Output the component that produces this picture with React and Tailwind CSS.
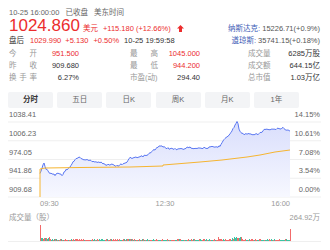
import React from "react";

const FONT = "font-['Liberation_Sans','Noto_Sans_CJK_SC',sans-serif]";

// pseudo random so the chart looks the same every run
const rnd = (i) => {
  const x = Math.sin(i * 12.9898 + 78.233) * 43758.5453;
  return x - Math.floor(x);
};

const priceKeys = [
  [40, 173], [42, 168], [44, 163], [46, 169], [49, 172], [52, 174], [55, 175], [58, 173],
  [62, 175], [66, 170], [70, 167], [74, 161], [78, 157], [82, 159], [87, 160], [92, 161],
  [97, 162], [102, 163], [107, 165], [112, 164], [117, 166], [122, 164], [127, 162], [130, 158],
  [135, 158], [140, 157], [144, 156], [148, 155], [151, 152], [154, 150], [157, 148], [160, 146],
  [164, 147], [167, 148], [172, 149], [180, 149], [185, 149], [187, 147], [192, 148], [200, 148],
  [207, 148], [213, 147], [217, 147], [220, 146], [222, 142], [224, 139], [227, 137], [230, 134],
  [232, 131], [234, 127], [236, 123], [237, 121.5], [238, 124], [239, 129], [241, 132], [243, 134],
  [248, 134], [253, 135], [258, 134], [262, 132], [265, 129], [270, 130], [277, 129], [283, 128],
  [287, 130], [290, 131],
];

const interp = (keys, x) => {
  for (let i = 0; i < keys.length - 1; i++) {
    const [x0, y0] = keys[i];
    const [x1, y1] = keys[i + 1];
    if (x >= x0 && x <= x1) return y0 + ((y1 - y0) * (x - x0)) / (x1 - x0 || 1);
  }
  return keys[keys.length - 1][1];
};

const pricePts = [];
for (let x = 40; x <= 290; x += 1) {
  const j = x === 237 || x === 44 ? 0 : (rnd(x) - 0.5) * 1.6;
  pricePts.push([x, interp(priceKeys, x) + j]);
}
const priceLine = pricePts.map((p, i) => `${i ? "L" : "M"}${p[0]},${p[1].toFixed(2)}`).join(" ");
const priceArea = `M40,197 ${pricePts.map((p) => `L${p[0]},${p[1].toFixed(2)}`).join(" ")} L290,197 Z`;

const avgLine =
  "M40,197 L40,169 L45,168 L80,167.5 L130,167 L163,166 L163,165 L200,162 L222,160 L247,157 L260,155 L275,152 L290,150";

const volBars = [];
for (let x = 40; x <= 290; x++) {
  let h = 0.6 + rnd(x * 3.1) * 1.4;
  if (x === 40) h = 16;
  else if (x < 50) h = 2 + rnd(x) * 1.6;
  else if (x === 218) h = 4;
  else if (x >= 232 && x <= 241) h = 2 + rnd(x) * 2;
  else if (x === 290) h = 12;
  else if (rnd(x * 7.7) > 0.96) h = 2.5;
  const red = x === 40 || x === 290 || x === 218 || rnd(x * 5.3) > 0.5;
  volBars.push({ x, h, color: red ? "#f26b6b" : "#3cc4a2" });
}

const stats = [
  [["今", "开"], "951.500", true, ["最", "高"], "1045.000", true, "成交量", "6285万股"],
  [["昨", "收"], "909.680", false, ["最", "低"], "944.200", true, "成交额", "644.15亿"],
  [["换", "手", "率"], "6.27%", false, ["市盈(动)"], "294.40", false, "总市值", "1.03万亿"],
];

const tabs = ["分时", "五日", "日K", "周K", "月K", "1年"];

const leftAxis = ["1038.41", "1006.23", "974.05", "941.86", "909.68"];
const rightAxis = ["14.15%", "10.61%", "7.08%", "3.54%", "0.00%"];
const gridY = [122, 140.75, 159.5, 178.25, 197];

function Label({ parts }) {
  return (
    <span className="flex w-[28px] justify-between text-[#999]">
      {parts.map((p) => (
        <span key={p}>{p}</span>
      ))}
    </span>
  );
}

export default function App() {
  return (
    <div className={`w-[330px] h-[250px] overflow-hidden bg-white ${FONT} text-[7.5px]`}>
      {/* header */}
      <div className="flex justify-between pl-[9px] pr-[10px] pt-[8px]">
        <div className="flex flex-col">
          <div className="flex h-[9px] items-center gap-[6px] leading-[9px] text-[#666]">
            <span>10-25 16:00:00</span>
            <span>已收盘</span>
            <span>美东时间</span>
          </div>
          <div className="flex h-[17px] items-baseline leading-[17px] text-[#ec2d2d]">
            <span className="text-[17px]">1024.860</span>
            <span className="ml-[3px]">美元</span>
            <span className="ml-[5px]">+115.180 (+12.66%)</span>
            <svg width="7" height="7" viewBox="0 0 7 7" className="ml-[6px] self-center mt-[5px]">
              <polygon points="3.5,0 7,3.6 5,3.6 5,7 2,7 2,3.6 0,3.6" fill="#ec2d2d" />
            </svg>
          </div>
          <div className="mt-[1px] flex h-[12px] items-center leading-[12px]">
            <span className="text-[#333]">盘后</span>
            <span className="ml-[6px] text-[#ec2d2d]">1029.990</span>
            <span className="ml-[4px] text-[#ec2d2d]">+5.130</span>
            <span className="ml-[5px] text-[#ec2d2d]">+0.50%</span>
            <span className="ml-[5px] text-[#333]">10-25 19:59:58</span>
          </div>
        </div>
        <div className="flex flex-col items-end justify-end">
          <div className="h-[12px] leading-[12px]">
            <span className="text-[#3c5bb6]">纳斯达克: </span>
            <span className="text-[#555]">15226.71(+0.9%)</span>
          </div>
          <div className="h-[12px] leading-[12px]">
            <span className="text-[#3c5bb6]">道琼斯: </span>
            <span className="text-[#555]">35741.15(+0.18%)</span>
          </div>
        </div>
      </div>

      {/* stats */}
      <div className="mt-[1px] flex flex-col pl-[9px] pr-[10px]">
        {stats.map((r, i) => (
          <div key={i} className="flex h-[12px] items-center leading-[12px]">
            <div className="flex w-[70px] justify-between">
              <Label parts={r[0]} />
              <span className={r[2] ? "text-[#ec2d2d]" : "text-[#333]"}>{r[1]}</span>
            </div>
            <div className="ml-[51px] flex w-[70px] justify-between">
              {r[3].length === 1 ? <span className="text-[#999]">{r[3][0]}</span> : <Label parts={r[3]} />}
              <span className={r[5] ? "text-[#ec2d2d]" : "text-[#333]"}>{r[4]}</span>
            </div>
            <div className="ml-[48px] flex flex-1 justify-between">
              <span className="text-[#999]">{r[6]}</span>
              <span className="text-[#333]">{r[7]}</span>
            </div>
          </div>
        ))}
      </div>

      {/* tabs */}
      <div className="mt-[8px] flex gap-[4.2px] pl-[8px]">
        {tabs.map((t, i) => (
          <div
            key={t}
            className={`flex h-[15.5px] w-[45px] items-center justify-center rounded-[2px] bg-[#f3f4f6] text-[7.5px] ${
              i === 0 ? "font-bold text-[#333]" : "text-[#666]"
            }`}
          >
            {t}
          </div>
        ))}
      </div>

      {/* price chart */}
      <svg width="330" height="100" viewBox="0 108 330 100" className="block">
        <defs>
          <linearGradient id="fillGrad" x1="0" y1="0" x2="0" y2="1">
            <stop offset="0%" stopColor="#d9defc" />
            <stop offset="100%" stopColor="#f7f8ff" />
          </linearGradient>
        </defs>
        {gridY.map((y) => (
          <line key={y} x1="8" x2="321" y1={y} y2={y} stroke="#efefef" strokeWidth="1" />
        ))}
        <path d={priceArea} fill="url(#fillGrad)" />
        <path d={priceLine} fill="none" stroke="#5b78f2" strokeWidth="1" strokeLinejoin="round" />
        <path d={avgLine} fill="none" stroke="#f6b531" strokeWidth="1" />
        {leftAxis.map((t, i) => (
          <text key={t} x="9" y={gridY[i] - 4.8} fontSize="7.5" fill="#666" fontFamily="Liberation Sans, sans-serif">
            {t}
          </text>
        ))}
        {rightAxis.map((t, i) => (
          <text
            key={t}
            x="320"
            y={gridY[i] - 4.8}
            fontSize="7.5"
            fill="#666"
            textAnchor="end"
            fontFamily="Liberation Sans, sans-serif"
          >
            {t}
          </text>
        ))}
        <text x="40" y="205.7" fontSize="7.5" fill="#999" fontFamily="Liberation Sans, sans-serif">
          09:30
        </text>
        <text x="165" y="205.7" fontSize="7.5" fill="#999" textAnchor="middle" fontFamily="Liberation Sans, sans-serif">
          12:30
        </text>
        <text x="290" y="205.7" fontSize="7.5" fill="#999" textAnchor="end" fontFamily="Liberation Sans, sans-serif">
          16:00
        </text>
      </svg>

      {/* volume */}
      <div className="mt-[5px] flex h-[10px] items-center justify-between pl-[9px] pr-[10px] leading-[10px] text-[#999]">
        <span>成交量（股）</span>
        <span>264.92万</span>
      </div>
      <svg width="330" height="22" viewBox="0 223 330 22" className="block" shapeRendering="crispEdges">
        <line x1="8" x2="321" y1="241.5" y2="241.5" stroke="#efefef" strokeWidth="1" />
        {volBars.map((b) => (
          <rect key={b.x} x={b.x} y={241 - b.h} width="1" height={b.h} fill={b.color} />
        ))}
      </svg>
    </div>
  );
}
